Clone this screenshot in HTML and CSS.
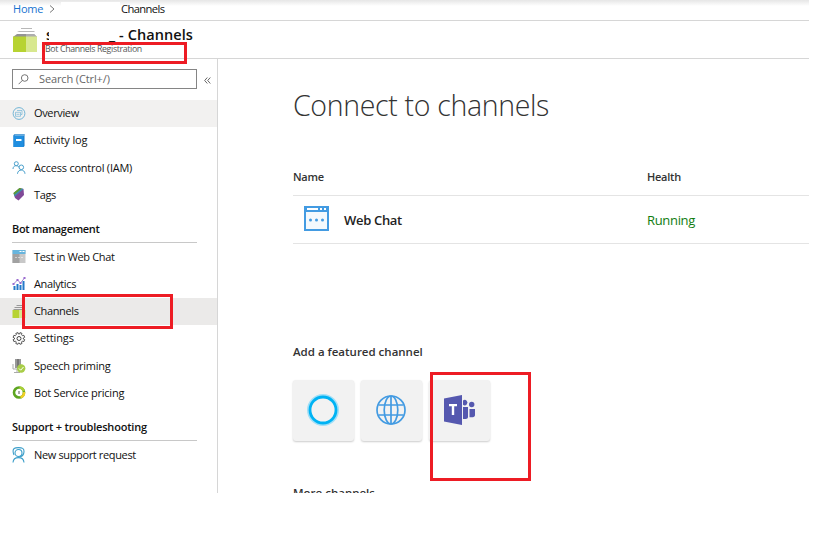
FILE: index.html
```html
<!DOCTYPE html>
<html lang="en">
<head>
<meta charset="utf-8">
<title>Channels</title>
<link rel="stylesheet" href="styles.css">
</head>
<body>
<div class="portal">
  <nav class="crumbs"><a class="home">Home</a>
    <svg class="chev" width="6" height="8" viewBox="0 0 6 8"><path d="M1 0.5 5 4 1 7.5" fill="none" stroke="#777"/></svg>
    <span class="blank"></span><span class="here">Channels</span></nav>
  <header class="head">
    <svg class="cube" width="25" height="24" viewBox="0 0 25 24"><path d="M8 0h11v1H8zM6 3h15l1 1H4z" fill="#b8b8b8"/><path d="M4 6h17l3 3H0z" fill="#949494"/><path d="M13 6h8l3 3H13z" fill="#adadad"/><path d="M0 8.500h13V24H0z" fill="#b7d332"/><path d="M13 8.500h11V24H13z" fill="#d8e88f"/></svg>
    <div class="titles"><h1 class="title"><span class="initial">s</span><span class="rest">_ - Channels</span></h1><div class="kind">Bot Channels Registration</div></div>
    <div class="mark mark-kind"></div>
  </header>
  <div class="body">
    <aside class="side">
      <div class="find"><div class="box"><svg width="11" height="11" viewBox="0 0 11 11" fill="none" stroke="#666" stroke-width=".9"><circle cx="6.700" cy="4" r="3.300"/><path d="M4.400 6.400.6 10.200"/></svg><span>Search (Ctrl+/)</span></div><svg class="fold" width="7" height="7" viewBox="0 0 7 7" fill="none" stroke="#555" stroke-width=".9"><path d="M3.300.5.7 3.500l2.600 3M6.300.5 3.700 3.500l2.600 3"/></svg></div>
      <ul class="list first">
        <li class="hover"><svg width="13" height="13" viewBox="0 0 13 13" fill="none" stroke="#72b5d6"><circle cx="6.500" cy="6.500" r="5.900"/><path d="M4.500 3.500h5v4h-1M3 5.300h5v4H3zM4 7.300h3" stroke-width=".7"/></svg><span>Overview</span></li>
        <li><svg width="13" height="13" viewBox="0 0 13 13"><path d="M1 1 2.500 0H12v12l-1 1H1z" fill="#1677c4"/><path d="M1 1.500h10V13H1z" fill="#1f8ee0"/><path d="M2.500.6h9v1H2z" fill="#a8d3ef"/><path d="M3.500 5H9v2H3.500z" fill="#fff"/></svg><span class="wide">Activity log</span></li>
        <li><svg width="13" height="13" viewBox="0 0 13 13" fill="none" stroke="#4aa0cc"><circle cx="3.800" cy="2.700" r="2"/><path d="M.5 8c0-4 5-4.200 6.200-1.500"/><circle cx="8.800" cy="6.300" r="2.300"/><path d="M5 12.800c.2-5 7.300-5 7.500 0"/></svg><span class="loose">Access control (IAM)</span></li>
        <li><svg width="13" height="13" viewBox="0 0 13 13"><path d="M1 5 7 0l4 1 .5 6L6 12.500 2.500 10z" fill="#804998"/><path d="M1 5 7 0l2.500.5L1.500 7z" fill="#59a22f"/><path d="M1.500 7 9.500.5l1.500.5-9 7.500z" fill="#3c91ae"/></svg><span>Tags</span></li>
      </ul>
      <h2 class="group">Bot management</h2>
      <ul class="list manage">
        <li><svg width="13" height="13" viewBox="0 0 13 13"><path d="M0 0h13v13H0z" fill="#c8c8c8"/><path d="M0 4h7v9H0z" fill="#a1a1a1"/><path d="M0 0h13v4H0z" fill="#68b5dd"/><path d="M7 1h2v1H7zM10 1h2v1h-2zM3 7h1v1H3zM6 7h1v1H6zM9 7h1v1H9z" fill="#fff"/></svg><span>Test in Web Chat</span></li>
        <li><svg width="13" height="13" viewBox="0 0 13 13"><path d="M1 9h2v4H1zM4 7h2v6H4zM7 8h2v5H7zM10 4h2v9h-2z" fill="#2479c9"/><path d="m1 7 4-4 3 3 4-5" fill="none" stroke="#8767c5" stroke-width=".8"/><path d="M0 6h2v2H0zM4 2h2v2H4zM7 5h2v2H7zM11 0h2v2h-2z" fill="#9b6bd0"/></svg><span>Analytics</span></li>
        <li class="active"><svg width="13" height="13" viewBox="0 0 13 13"><path d="M4 0h6v1H4zM2 2h9v1H2zM1 4h11v1H1z" fill="#999"/><path d="M0 5h7v8H0z" fill="#b7d332"/><path d="M7 5h6v8H7z" fill="#d8e88f"/></svg><span>Channels</span></li>
        <li><svg width="13" height="13" viewBox="0 0 13 13" fill="none" stroke="#444"><path d="m5.500.6.4 1.400h1.200L7.500.6l2 .8-.5 1.400.9.9 1.500-.4.8 2-1.400.700v1l1.400.6-.8 2-1.500-.5-.9.900.5 1.500-2 .800-.7-1.300H5.900l-.6 1.300-2-.8.500-1.500-.9-.9-1.500.5-.8-2L2 7V6L.6 5.300l.8-2 1.500.4.9-.9-.5-1.400z" stroke-width=".9"/><circle cx="6.500" cy="6.500" r="2"/></svg><span class="wide">Settings</span></li>
        <li><svg width="14" height="14" viewBox="0 0 14 14"><path d="M3 0h6v9H3z" fill="#999"/><path d="M5 0h2v9H5z" fill="#777"/><path d="M1 5v5h8M5 10v4M2 13.500h6" fill="none" stroke="#aaa"/><circle cx="9.200" cy="9.500" r="4.200" fill="#a8cd47"/><path d="m7 9.500 1.700 1.700 2.800-3.200" fill="none" stroke="#fff"/></svg><span class="loose">Speech priming</span></li>
        <li><svg width="13" height="13" viewBox="0 0 13 13" fill="none"><circle cx="6.500" cy="6.500" r="5" stroke="#5da520" stroke-width="2.600"/><path d="M7 1.500a5 5 0 0 1 4.300 3.500" stroke="#a9cf37" stroke-width="2.600"/><path d="M11.500 6a5 5 0 0 1-3.500 5.300" stroke="#f1cf25" stroke-width="2.600"/><path d="M6.500 5v3" stroke="#555"/></svg><span class="loose">Bot Service pricing</span></li>
      </ul>
      <h2 class="group support">Support + troubleshooting</h2>
      <ul class="list"><li><svg width="14" height="16" viewBox="0 0 14 16" fill="none" stroke="#3d9fca" stroke-width="1.100"><path d="M2 8C-1 .5 4 .6 6.500.6s7 0 5 6.400c-.5 1.500-2 2.500-4 2.500"/><circle cx="6.500" cy="6" r="3.500"/><path d="M1 15.500C1.500 9 11.500 9 12 15.500"/></svg><span>New support request</span></li></ul>
    </aside>
    <main class="main">
      <h1 class="hero">Connect to channels</h1>
      <div class="table">
        <div class="tr th"><span>Name</span><span>Health</span></div>
        <div class="tr row"><span class="chat"><svg width="25" height="25" viewBox="0 0 25 25"><path d="M1 1h23v23H1z" fill="#f4f9fd" stroke="#439be2" stroke-width="2"/><path d="M0 0h25v6H0z" fill="#439be2"/><path d="M3 2h11v2H3zM16 2h2v2h-2zM20 2h2v2h-2z" fill="#fff"/><g fill="#439be2"><circle cx="6.500" cy="14" r="1.500"/><circle cx="12.500" cy="14" r="1.500"/><circle cx="18.500" cy="14" r="1.500"/></g></svg><b>Web Chat</b></span><span class="ok">Running</span></div>
      </div>
      <h2 class="sub">Add a featured channel</h2>
      <div class="tiles">
        <div class="tile"><svg width="34" height="34" viewBox="0 0 34 34" fill="none"><circle cx="17" cy="17" r="14.500" stroke="#a1dff7" stroke-width="3"/><circle cx="17" cy="17" r="13" stroke="#00b3f4" stroke-width="2.800"/></svg></div>
        <div class="tile"><svg width="30" height="30" viewBox="0 0 30 30" fill="none" stroke="#439be2" stroke-width="1.700"><circle cx="15" cy="15" r="14"/><ellipse cx="15" cy="15" rx="6.800" ry="14"/><path d="M2.500 10h25M2.500 20h25M15 1v28"/></svg></div>
        <div class="tile teams"><svg width="31" height="30" viewBox="0 0 31 30" fill="#5558af"><path d="M0 3.500 18 0v30L0 26.500z"/><path d="M5 9h8v2.200h-2.800V20H7.800v-8.800H5z" fill="#fff"/><path d="M19 5.600a2.700 2.700 0 1 1 0 4.200zM19 12h5v10c0 1.300-1 2-2.200 2H19z"/><circle cx="27.700" cy="9.500" r="2.700"/><path d="M25.500 14H31v6c0 1.300-1 2.200-2.200 2.200h-3.300z"/></svg></div>
      </div>
      <h2 class="more">More channels</h2>
      <div class="mark mark-teams"></div>
    </main>
    <div class="mark mark-channels"></div>
  </div>
</div>
</body>
</html>
```
FILE: styles.css
```css
* { box-sizing: border-box; }
body { margin: 0; background: #fff; color: #111; font: 11px/14px "Open Sans", "Noto Sans", sans-serif; }
h1, h2, ul { margin: 0; padding: 0; font-weight: 400; }
svg { display: block; flex: none; }
.portal { width: 809px; height: 493px; overflow: hidden; }
.crumbs { display: flex; align-items: center; height: 21px; padding: 0 0 3px 13px; border-bottom: 1px solid #d6d6d6; background: linear-gradient(#e6e6e6, #fff 6px); }
.home { width: 30px; color: #1673cf; letter-spacing: -.22px; }
.chev { margin-left: 6px; }
.blank { width: 59px; height: 15px; margin: 2px 0 0 6px; background: #fff; }
.here { margin-left: 1px; letter-spacing: -.6px; font-size: 11.200px; }
.head { position: relative; display: flex; height: 38px; padding: 7px 0 0 13px; border-bottom: 1px solid #d6d6d6; }
.titles { margin-left: 8px; }
.title { display: flex; height: 15px; font-size: 14.500px; line-height: 14px; font-weight: 600; }
.initial { width: 3px; overflow: hidden; }
.rest { margin-left: 60px; letter-spacing: .08px; }
.kind { margin-top: -1px; margin-left: -1px; color: #555; font-size: 8.800px; letter-spacing: -.36px; }
.mark { position: absolute; border: 3px solid #ed1c24; }
.mark-kind { left: 42px; top: 21px; width: 145px; height: 22px; }
.body { position: relative; display: flex; height: 434px; }
.side { width: 218px; border-right: 1px solid #d6d6d6; }
.find { display: flex; align-items: center; height: 40px; padding-left: 12px; }
.box { display: flex; align-items: center; width: 185px; height: 20px; padding-left: 5px; border: 1px solid #858585; color: #666; }
.box span { margin-left: 10px; letter-spacing: -.12px; }
.fold { margin: 2px 0 0 7px; }
.list { list-style: none; }
.list li { display: flex; align-items: center; height: 27.250px; padding-left: 12px; }
.list svg { width: 14px; }
.list span { margin-left: 8px; letter-spacing: -.36px; white-space: nowrap; }
.list .loose { letter-spacing: -.23px; }
.list .wide { letter-spacing: -.12px; }
.first { padding-top: .5px; }
.manage { padding-top: .5px; }
.hover { background: #f2f1f0; }
.active { background: #ebeae9; }
.group { width: 185px; height: 34px; margin: 0 0 0 12px; padding-top: 13.500px; border-bottom: 1px solid #c8c8c8; font-size: 11px; font-weight: 600; line-height: 14px; letter-spacing: -.3px; white-space: nowrap; }
.first + .group { letter-spacing: -.32px; }
.support { margin-bottom: .5px; letter-spacing: -.2px; }
.main { position: relative; width: 591px; padding-left: 75px; }
.hero { height: 105px; padding-top: 26px; color: #333; font-size: 28.500px; line-height: 40px; font-weight: 300; letter-spacing: -.33px; }
.tr { display: grid; grid-template-columns: 354px 1fr; align-items: center; border-bottom: 1px solid #e4e4e4; }
.th { height: 32px; padding-bottom: 5px; font-weight: 600; color: #333; letter-spacing: -.25px; }
.row { height: 48px; font-size: 13px; letter-spacing: -.32px; }
.chat { display: flex; align-items: center; gap: 15px; padding-left: 11px; }
.chat svg { position: relative; top: -1px; }
.chat b { font-weight: 600; color: #222; }
.ok { color: #107c10; }
.sub { margin-top: 101px; color: #333; font-size: 11.500px; font-weight: 600; }
.tiles { display: flex; gap: 7px; margin-top: 21px; }
.tile { display: flex; align-items: center; justify-content: center; width: 61px; height: 61px; border-radius: 3px; background: #f2f2f2; box-shadow: 0 1px 2px #ccc; }
.tile svg { margin-top: -1px; margin-right: 1px; }
.teams { justify-content: flex-start; padding-left: 15px; }
.more { margin-top: 45px; color: #333; font-size: 11.500px; font-weight: 600; }
.mark-teams { left: 212px; top: 313px; width: 101px; height: 109px; }
.mark-channels { left: 22px; top: 235px; width: 151px; height: 35px; }
```
